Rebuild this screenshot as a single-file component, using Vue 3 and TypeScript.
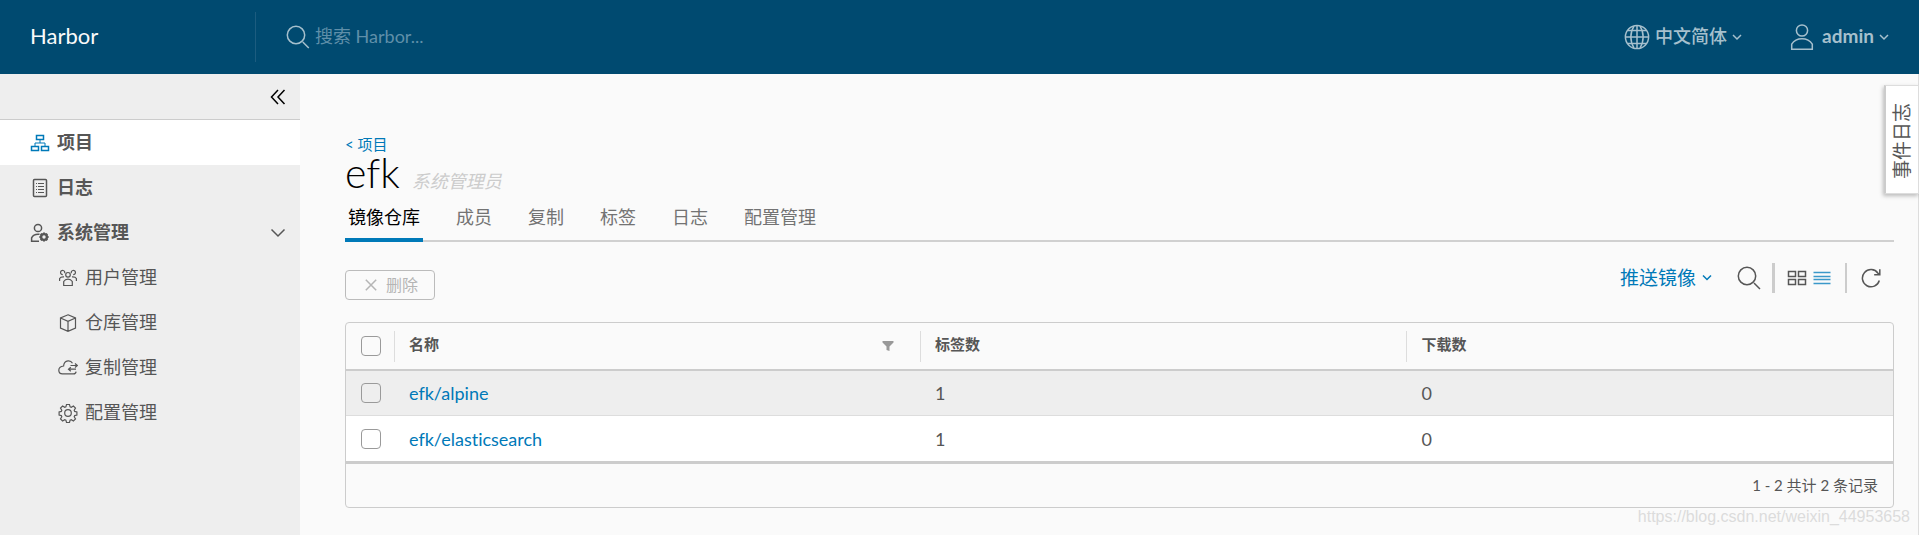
<script setup lang="ts">
import { ref, computed } from 'vue'

interface Repo {
  name: string
  tags: number
  pulls: number
}

const repos: Repo[] = [
  { name: 'efk/alpine', tags: 1, pulls: 0 },
  { name: 'efk/elasticsearch', tags: 1, pulls: 0 },
]

const tabs = ['镜像仓库', '成员', '复制', '标签', '日志', '配置管理']
const activeTab = ref(tabs[0])
const query = ref('')
const adminOpen = ref(true)
const selected = ref<string[]>([])

const allSelected = computed({
  get: () => selected.value.length === repos.length,
  set: (on: boolean) => {
    selected.value = on ? repos.map((r) => r.name) : []
  },
})
</script>

<template>
  <div class="shell">
    <header class="topbar">
      <a class="brand" href="#">Harbor</a>
      <label class="search">
        <svg class="icon" width="24" height="24" viewBox="0 0 24 24" aria-hidden="true">
          <circle cx="10" cy="10" r="8.7" />
          <path d="M16.8 17l6 6" />
        </svg>
        <input v-model="query" type="text" placeholder="搜索 Harbor..." aria-label="搜索 Harbor" />
      </label>
      <button class="top-action language" type="button">
        <svg class="icon" width="26" height="26" viewBox="0 0 26 26" aria-hidden="true">
          <circle cx="13" cy="13" r="11.6" />
          <path d="M13 1.4v23.2M1.4 13h23.2M4 6.6h18M4 19.4h18" />
          <path d="M10 2.2C5.8 8.5 5.8 17.5 10 23.8M16 2.2C20.2 8.5 20.2 17.5 16 23.8" />
        </svg>
        <span>中文简体</span>
        <svg class="icon" width="10" height="8" viewBox="0 0 10 8" aria-hidden="true"><path d="M1 2l4 4 4-4" /></svg>
      </button>
      <button class="top-action account" type="button">
        <svg class="icon" width="24" height="28" viewBox="0 0 24 28" aria-hidden="true">
          <circle cx="12" cy="7.5" r="5.6" />
          <path d="M1.7 26.2v-5C4 17.6 7.6 15.8 12 15.800s8 1.800 10.300 5.400v5z" />
        </svg>
        <span>admin</span>
        <svg class="icon" width="10" height="8" viewBox="0 0 10 8" aria-hidden="true"><path d="M1 2l4 4 4-4" /></svg>
      </button>
    </header>

    <div class="body">
      <nav class="sidebar">
        <div class="collapse">
          <button type="button" aria-label="收起">
            <svg class="icon" width="16" height="16" viewBox="0 0 16 16"><path d="M8 1L1.5 8 8 15M14.5 1L8 8l6.5 7" /></svg>
          </button>
        </div>
        <a class="item active" href="#">
          <svg class="icon" width="20" height="20" viewBox="0 0 20 20" aria-hidden="true">
            <path d="M6.5 2.500h7v4h-7zM1.500 13.500h7v4h-7zM11.500 13.500h7v4h-7z" />
            <path d="M10 6.500v3.500M5 13.500V10h10v3.500" stroke-width="1" />
          </svg>
          <span>项目</span>
        </a>
        <a class="item" href="#">
          <svg class="icon" width="20" height="20" viewBox="0 0 20 20" aria-hidden="true">
            <rect x="3.500" y="1.500" width="13" height="17" rx="1" />
            <path d="M6 5.500h1M8 5.500h6M6 8.500h1M8 8.500h6M6 11.500h1M8 11.500h6M6 14.500h1M8 14.500h6" stroke-width="1" />
          </svg>
          <span>日志</span>
        </a>
        <button class="item" type="button" :aria-expanded="adminOpen" @click="adminOpen = !adminOpen">
          <svg class="icon" width="20" height="20" viewBox="0 0 20 20" aria-hidden="true">
            <circle cx="8" cy="5" r="3.600" />
            <path d="M9 18.300H1.600v-3.500c1.200-2.400 3.400-3.600 6.400-3.600l1.500.1" />
            <circle cx="14" cy="14" r="2.900" stroke-width="2.400" />
            <path d="M14 9.400v1.500M14 17.100v1.500M9.400 14h1.500M17.100 14h1.500M10.700 10.700l1.100 1.100M16.200 16.200l1.100 1.100M17.300 10.700l-1.100 1.100M11.800 16.200l-1.100 1.100" stroke-width="2" />
          </svg>
          <span>系统管理</span>
          <svg class="icon caret" width="16" height="12" viewBox="0 0 16 12" aria-hidden="true"><path d="M1.500 2.500L8 9l6.500-6.500" /></svg>
        </button>
        <template v-if="adminOpen">
          <a class="item sub" href="#">
            <svg class="icon" width="20" height="20" viewBox="0 0 20 20" aria-hidden="true">
              <circle cx="10" cy="6.800" r="2.300" />
              <path d="M5.700 17.500v-4c1-1.600 2.400-2.300 4.300-2.300s3.300.7 4.300 2.300v4z" />
              <path d="M6.600 5.300A2.100 2.100 0 1 0 4.800 6.600M13.400 5.300a2.100 2.100 0 1 1 1.800 1.300M1.600 13v-2.500c.8-1.300 2.200-1.800 4.400-1.600M18.400 13v-2.500c-.8-1.300-2.200-1.800-4.400-1.600" />
            </svg>
            <span>用户管理</span>
          </a>
          <a class="item sub" href="#">
            <svg class="icon" width="20" height="20" viewBox="0 0 20 20" aria-hidden="true">
              <path d="M10 1.800l7.500 3.200v10L10 18.400 2.500 15V5zM2.500 5L10 8.400 17.500 5M10 8.400v10" />
            </svg>
            <span>仓库管理</span>
          </a>
          <a class="item sub" href="#">
            <svg class="icon" width="20" height="20" viewBox="0 0 20 20" aria-hidden="true">
              <path d="M14.500 5.200C13.500 3.500 12 2.700 10 2.900 7.500 3.200 5.800 5 5.600 8 2.600 8.300.8 9.800.8 12.300c0 2.300 1.700 3.600 3.700 3.600h11c1.500 0 2.400-.8 2.600-2.300" />
              <path d="M12.500 7.500h6.500M17 5.500l2.300 2-2.300 2M18 11.200h-7M12.800 9.200l-2.300 2 2.300 2" />
            </svg>
            <span>复制管理</span>
          </a>
          <a class="item sub" href="#">
            <svg class="icon" width="20" height="20" viewBox="0 0 20 20" aria-hidden="true">
              <circle cx="10" cy="10" r="3.300" />
              <path d="M8.500 1.500h3l.6 2.300 1.200.5 2.100-1.300 2.100 2.100-1.300 2.100.5 1.200 2.200.6v3l-2.200.6-.5 1.200 1.300 2.100-2.100 2.100-2.100-1.300-1.200.5-.6 2.300h-3l-.6-2.300-1.200-.5-2.100 1.300-2.100-2.100 1.300-2.100-.5-1.200-2.200-.6V9l2.200-.6.5-1.200-1.300-2.100 2.100-2.100 2.100 1.300 1.200-.5z" />
            </svg>
            <span>配置管理</span>
          </a>
        </template>
      </nav>

      <main class="content">
        <a class="back" href="#">&lt; 项目</a>
        <div class="title">
          <h1>efk</h1>
          <em>系统管理员</em>
        </div>

        <div class="tabs" role="tablist">
          <button
            v-for="tab in tabs"
            :key="tab"
            type="button"
            role="tab"
            :aria-selected="tab === activeTab"
            :class="{ current: tab === activeTab }"
            @click="activeTab = tab"
          >{{ tab }}</button>
        </div>

        <div class="toolbar">
          <button class="delete" type="button" disabled>
            <svg class="icon" width="12" height="12" viewBox="0 0 12 12" aria-hidden="true"><path d="M.8.8l10.400 10.400M11.200.8L.8 11.200" /></svg>
            <span>删除</span>
          </button>
          <div class="tools">
            <button class="push" type="button">
              <span>推送镜像</span>
              <svg class="icon" width="10" height="8" viewBox="0 0 10 8" aria-hidden="true"><path d="M1 1.500l4 4 4-4" /></svg>
            </button>
            <button class="find" type="button" aria-label="搜索">
              <svg class="icon" width="24" height="24" viewBox="0 0 24 24">
                <circle cx="10" cy="10" r="8.700" />
                <path d="M17 17l6 6" />
              </svg>
            </button>
            <div class="views">
              <button type="button" aria-label="卡片视图">
                <svg class="icon" width="20" height="16" viewBox="0 0 20 16">
                  <path d="M1.500 1.500h7v5h-7zM11.500 1.500h7v5h-7zM1.500 9.500h7v5h-7zM11.500 9.500h7v5h-7z" />
                </svg>
              </button>
              <button class="on" type="button" aria-label="列表视图">
                <svg class="icon" width="18" height="16" viewBox="0 0 18 16">
                  <path d="M.5 2.500h17M.5 6.500h17M.5 9.500h17M.5 13.500h17" />
                </svg>
              </button>
            </div>
            <button class="refresh" type="button" aria-label="刷新">
              <svg class="icon" width="20" height="20" viewBox="0 0 20 20">
                <path d="M18.300 12.500A8.600 8.600 0 1 1 17 5.200l1.500 1.500M18.800 1.200v5.600h-5.600" />
              </svg>
            </button>
          </div>
        </div>

        <div class="grid">
          <table>
            <thead>
              <tr>
                <th class="pick"><input v-model="allSelected" type="checkbox" aria-label="全选" /></th>
                <th class="name">
                  <div class="cell">
                    <span>名称</span>
                    <button type="button" aria-label="筛选">
                      <svg width="12" height="10" viewBox="0 0 12 10"><path d="M.5 0h11v1.500L7.500 5.500V10L4.500 9V5.500l-4-4z" /></svg>
                    </button>
                  </div>
                </th>
                <th><div class="cell">标签数</div></th>
                <th><div class="cell">下载数</div></th>
              </tr>
            </thead>
            <tbody>
              <tr v-for="repo in repos" :key="repo.name">
                <td class="pick"><input v-model="selected" type="checkbox" :value="repo.name" :aria-label="repo.name" /></td>
                <td><a href="#">{{ repo.name }}</a></td>
                <td>{{ repo.tags }}</td>
                <td>{{ repo.pulls }}</td>
              </tr>
            </tbody>
          </table>
          <div class="pager">1 - 2 共计 2 条记录</div>
        </div>
      </main>
    </div>

    <button class="events" type="button"><span>事件日志</span></button>
    <div class="watermark">https://blog.csdn.net/weixin_44953658</div>
  </div>
</template>

<style>
body {
  margin: 0;
}
</style>

<style scoped>
* {
  box-sizing: border-box;
}

.shell {
  position: relative;
  display: flex;
  flex-direction: column;
  min-height: 100vh;
  overflow: hidden;
  background: #fafafa;
  color: #565656;
  font-family: Lato, "Noto Sans CJK SC", sans-serif;
  font-size: 18px;
  font-variant-ligatures: none;
  line-height: 24px;
}

a {
  color: #0079b8;
  text-decoration: none;
}

button {
  display: flex;
  align-items: center;
  padding: 0;
  border: 0;
  background: none;
  color: inherit;
  font: inherit;
  font-variant-ligatures: none;
  cursor: pointer;
}

.icon {
  flex: none;
  fill: none;
  stroke: currentColor;
  stroke-width: 1.5;
}

.topbar {
  display: flex;
  align-items: center;
  height: 74px;
  padding-right: 30px;
  background: #004a70;
  color: #a6c0cd;
}

.brand {
  width: 255px;
  padding: 0 0 2px 30px;
  color: #fafafa;
  font-size: 22px;
}

.search {
  display: flex;
  flex: 1;
  align-items: center;
  gap: 5px;
  height: 50px;
  padding-left: 30px;
  border-left: 1px solid #1c5c7f;
}

.search input {
  flex: 1;
  min-width: 0;
  padding: 0 0 2px;
  border: 0;
  outline: 0;
  background: none;
  color: #fafafa;
  font: inherit;
}

.search input::placeholder {
  color: #5f8fa9;
  opacity: 1;
}

.top-action {
  gap: 5px;
}

.top-action span {
  padding-bottom: 2px;
}

.language {
  margin-right: 48px;
  font-weight: 500;
}

.account {
  font-size: 19px;
  font-weight: 700;
}

.account span {
  padding-left: 3px;
}

.body {
  display: flex;
  flex: 1;
}

.sidebar {
  flex: none;
  width: 300px;
  background: #eee;
}

.collapse {
  display: flex;
  align-items: center;
  justify-content: flex-end;
  height: 46px;
  padding-right: 14px;
  border-bottom: 1px solid #ccc;
  color: #000;
}

.item {
  display: flex;
  align-items: center;
  gap: 7px;
  width: 100%;
  height: 45px;
  padding: 0 14px 0 30px;
  color: #565656;
  font-weight: 700;
}

.item span {
  padding-bottom: 2px;
}

.item.active {
  background: #fff;
}

.item.active .icon {
  color: #0079b8;
}

.item .caret {
  margin-left: auto;
}

.sub {
  padding-left: 58px;
  font-weight: 400;
}

.sub .icon {
  stroke-width: 1.2;
}

.content {
  flex: 1;
  min-width: 0;
  padding: 58px 24px 0 45px;
  border-right: 1px solid #ddd;
}

.back {
  display: block;
  font-size: 15px;
}

.title {
  display: flex;
  align-items: baseline;
  gap: 12px;
  height: 44px;
  line-height: 34px;
}

.title h1 {
  margin: 0;
  color: #000;
  font-size: 41px;
  font-weight: 300;
}

.title em {
  color: #ccc;
}

.tabs {
  display: flex;
  gap: 30px;
  height: 42px;
  border-bottom: 2px solid #d0d0d0;
}

.tabs button {
  height: 42px;
  padding: 0 3px 4px;
  border-bottom: 4px solid transparent;
  color: #737373;
}

.tabs .current {
  border-bottom-color: #0079b8;
  color: #000;
}

.toolbar {
  display: flex;
  align-items: flex-end;
  justify-content: space-between;
  height: 58px;
}

.delete {
  gap: 9px;
  width: 90px;
  height: 30px;
  padding-left: 19px;
  border: 1px solid #bbb;
  border-radius: 4px;
  color: #b5b5b5;
  font-size: 16px;
}

.tools {
  display: flex;
  align-items: center;
  height: 30px;
  margin-bottom: 7px;
}

.push {
  gap: 6px;
  color: #0079b8;
  font-size: 19px;
}

.find {
  margin-left: 25px;
}

.views {
  display: flex;
  align-items: center;
  gap: 6px;
  height: 30px;
  margin: 0 14px 0 11px;
  padding: 0 14px 0 12px;
  border-right: 2px solid #ccc;
  border-left: 3px solid #ccc;
}

.views .on {
  color: #3a98c9;
}

.refresh {
  padding-right: 13px;
}

.grid {
  margin-top: 22px;
  border: 1px solid #ccc;
  border-radius: 4px;
}

table {
  width: 100%;
  border-spacing: 0;
  table-layout: fixed;
}

th,
td {
  padding: 0;
  text-align: left;
}

th {
  height: 48px;
  border-bottom: 2px solid #ccc;
  font-size: 15px;
  font-weight: 700;
}

th .cell {
  display: flex;
  align-items: center;
  justify-content: space-between;
  height: 31px;
  padding: 0 26px 4px 14px;
  border-left: 1px solid #ddd;
}

th.name {
  width: 34%;
}

th button {
  padding-top: 4px;
}

th svg {
  fill: #999;
}

td {
  height: 45px;
  padding-left: 15px;
  border-bottom: 1px solid #ddd;
  background: #fff;
  font-size: 18px;
}

tbody tr:first-child td {
  background: #eee;
}

tbody tr:last-child td {
  height: 48px;
  border-bottom: 3px solid #ccc;
}

th.pick,
td.pick {
  width: 48px;
  padding-left: 15px;
}

.pick input {
  display: block;
  width: 20px;
  height: 20px;
  margin: 0;
  border: 1px solid #9a9a9a;
  border-radius: 4px;
  appearance: none;
}

.pick input:checked {
  background: #0079b8;
}

.pager {
  padding: 9px 15px 10px;
  font-size: 15px;
  text-align: right;
}

.events {
  position: absolute;
  top: 85px;
  right: 0;
  justify-content: center;
  width: 35px;
  height: 109px;
  padding-top: 3px;
  border: 1px solid #ddd;
  border-left: 2px solid #ccc;
  background: #fff;
  box-shadow: -1px 2px 4px rgba(0, 0, 0, 0.25);
}

.events span {
  font-size: 19px;
  writing-mode: vertical-rl;
  text-orientation: sideways;
  transform: rotate(180deg);
}

.watermark {
  position: absolute;
  right: 9px;
  bottom: 6px;
  color: #dcdcdc;
  font-family: "Liberation Sans", sans-serif;
  font-size: 16px;
  pointer-events: none;
}
</style>
